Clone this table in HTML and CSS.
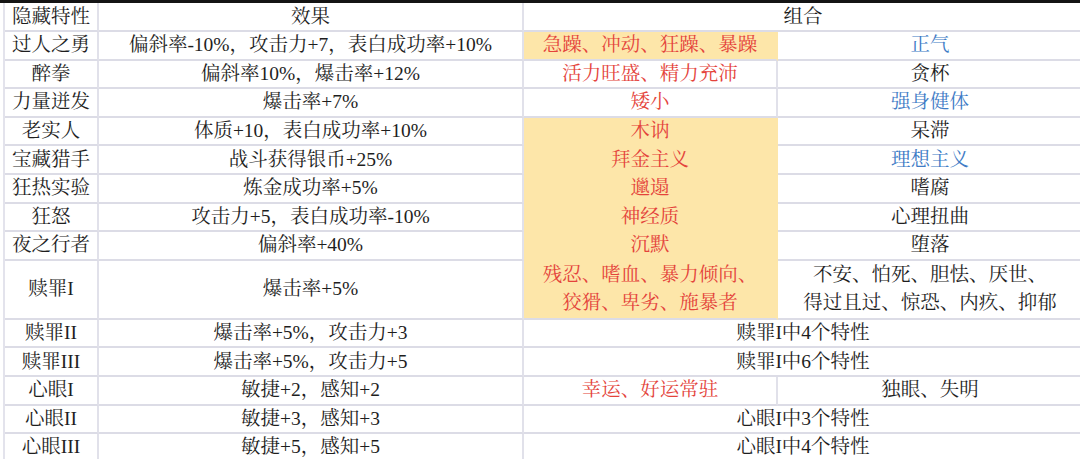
FILE: index.html
```html
<!DOCTYPE html>
<html lang="zh">
<head>
<meta charset="utf-8">
<link rel="stylesheet" href="styles.css">
</head>
<body>
<div class="topbar"></div>
<table class="traits">
  <colgroup>
    <col class="c1"><col class="c2"><col class="c3"><col class="c4">
  </colgroup>
  <tr class="head">
    <td>隐藏特性</td>
    <td>效果</td>
    <td colspan="2">组合</td>
  </tr>
  <tr>
    <td>过人之勇</td>
    <td>偏斜率-10%，攻击力+7，表白成功率+10%</td>
    <td class="hl red">急躁、冲动、狂躁、暴躁</td>
    <td class="blue">正气</td>
  </tr>
  <tr>
    <td>醉拳</td>
    <td>偏斜率10%，爆击率+12%</td>
    <td class="red">活力旺盛、精力充沛</td>
    <td>贪杯</td>
  </tr>
  <tr>
    <td>力量迸发</td>
    <td>爆击率+7%</td>
    <td class="red">矮小</td>
    <td class="blue">强身健体</td>
  </tr>
  <tr>
    <td>老实人</td>
    <td>体质+10，表白成功率+10%</td>
    <td class="hl cont red">木讷</td>
    <td>呆滞</td>
  </tr>
  <tr>
    <td>宝藏猎手</td>
    <td>战斗获得银币+25%</td>
    <td class="hl cont red">拜金主义</td>
    <td class="blue">理想主义</td>
  </tr>
  <tr>
    <td>狂热实验</td>
    <td>炼金成功率+5%</td>
    <td class="hl cont red">邋遢</td>
    <td>嗜腐</td>
  </tr>
  <tr>
    <td>狂怒</td>
    <td>攻击力+5，表白成功率-10%</td>
    <td class="hl cont red">神经质</td>
    <td>心理扭曲</td>
  </tr>
  <tr>
    <td>夜之行者</td>
    <td>偏斜率+40%</td>
    <td class="hl cont red">沉默</td>
    <td>堕落</td>
  </tr>
  <tr class="tall">
    <td>赎罪I</td>
    <td>爆击率+5%</td>
    <td class="hl red">残忍、嗜血、暴力倾向、<br>狡猾、卑劣、施暴者</td>
    <td>不安、怕死、胆怯、厌世、<br>得过且过、惊恐、内疚、抑郁</td>
  </tr>
  <tr>
    <td>赎罪II</td>
    <td>爆击率+5%，攻击力+3</td>
    <td colspan="2">赎罪I中4个特性</td>
  </tr>
  <tr>
    <td>赎罪III</td>
    <td>爆击率+5%，攻击力+5</td>
    <td colspan="2">赎罪I中6个特性</td>
  </tr>
  <tr>
    <td>心眼I</td>
    <td>敏捷+2，感知+2</td>
    <td class="red">幸运、好运常驻</td>
    <td>独眼、失明</td>
  </tr>
  <tr>
    <td>心眼II</td>
    <td>敏捷+3，感知+3</td>
    <td colspan="2">心眼I中3个特性</td>
  </tr>
  <tr>
    <td>心眼III</td>
    <td>敏捷+5，感知+5</td>
    <td colspan="2">心眼I中4个特性</td>
  </tr>
</table>
</body>
</html>
```
FILE: styles.css
```css
html, body {
  margin: 0;
  padding: 0;
  background: #ffffff;
  overflow: hidden;
}
body {
  width: 1080px;
  height: 459px;
  font-family: "Liberation Serif", "Noto Serif CJK SC", "Noto Sans CJK SC", serif;
  font-size: 19.5px;
  color: #1e1e1e;
}
.topbar {
  height: 3px;
  background: #141414;
}
.traits {
  margin-left: 3px;
  width: 1079px;
  table-layout: fixed;
  border-collapse: separate;
  border-spacing: 0;
  border-left: 2px solid #e3e3ec;
}
.c1 { width: 94px; }
.c2 { width: 425px; }
.c3 { width: 254px; }
.c4 { width: 306px; }
.traits td {
  height: 28.6px;
  padding: 0;
  text-align: center;
  vertical-align: middle;
  line-height: 24px;
  white-space: nowrap;
  border-right: 2px solid #e1e1ea;
  border-bottom: 2px solid #dcdce6;
  box-sizing: border-box;
}
.traits .head td {
  height: 29px;
}
.traits .tall td {
  height: 59px;
  line-height: 28.5px;
}
.traits td.hl {
  background: #fde6a9;
  border-right-color: #fde6a9;
}
.traits td.cont {
  border-bottom-color: #fde6a9;
}
.red { color: #e4433b; }
.blue { color: #3f7cc6; }
```
